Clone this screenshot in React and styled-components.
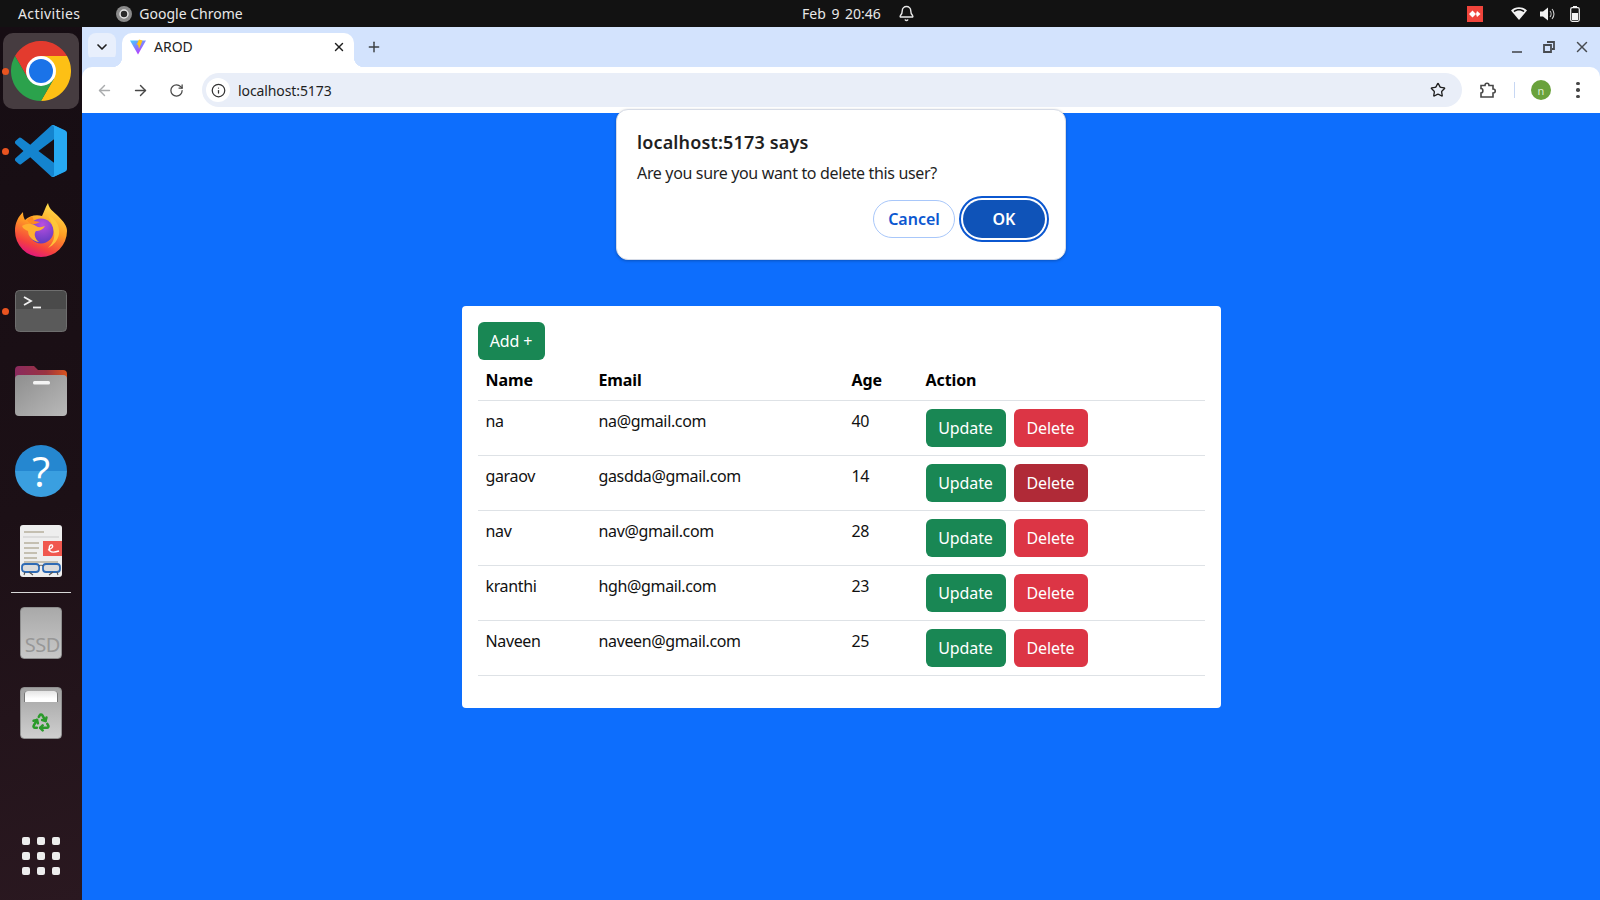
import styled, { createGlobalStyle } from "styled-components"
import {
  ArrowLeft,
  ArrowRight,
  Bell,
  ChevronDown,
  Info,
  Plus,
  Recycle,
  RotateCw,
  Star,
  X,
} from "lucide-react"

const users = [
  { name: "na", email: "na@gmail.com", age: 40 },
  { name: "garaov", email: "gasdda@gmail.com", age: 14, hot: true },
  { name: "nav", email: "nav@gmail.com", age: 28 },
  { name: "kranthi", email: "hgh@gmail.com", age: 23 },
  { name: "Naveen", email: "naveen@gmail.com", age: 25 },
]

const ChromeLogo = ({ size = 60 }) => (
  <svg width={size} height={size} viewBox="0 0 48 48">
    <path fill="#e33b2e" d="M3.2 12A24 24 0 0 1 44.8 12L24 12 13.6 30Z" />
    <path fill="#fdc015" d="M44.8 12A24 24 0 0 1 24 48L34.4 30 24 12Z" />
    <path fill="#2ba24c" d="M24 48A24 24 0 0 1 3.2 12L13.6 30 34.4 30Z" />
    <circle cx="24" cy="24" r="12" fill="#fff" />
    <circle cx="24" cy="24" r="9.6" fill="#1a73e8" />
  </svg>
)

const VsCodeLogo = () => (
  <svg width="52" height="52" viewBox="0 0 24 24">
    <path
      fill="#1484cf"
      d="M23.15 2.587L18.21.21a1.494 1.494 0 0 0-1.705.29l-9.46 8.63-4.12-3.128a.999.999 0 0 0-1.276.057L.327 7.261A1 1 0 0 0 .326 8.74L3.899 12 .326 15.26a1 1 0 0 0 .001 1.479L1.65 17.94a.999.999 0 0 0 1.276.057l4.12-3.128 9.46 8.63a1.492 1.492 0 0 0 1.704.29l4.942-2.377A1.5 1.5 0 0 0 24 20.06V3.939a1.5 1.5 0 0 0-.85-1.352zm-5.146 14.861L10.826 12l7.178-5.448v10.896z"
    />
    <path
      fill="#27a9f2"
      d="M18.21.21l4.94 2.377A1.5 1.5 0 0 1 24 3.94v16.12a1.5 1.5 0 0 1-.85 1.352l-4.94 2.377a1.49 1.49 0 0 1-1.7-.29c.7.5 1.5.1 1.5-.7V1.2c0-.8-.8-1.2-1.5-.7a1.49 1.49 0 0 1 1.7-.29z"
    />
  </svg>
)

const FirefoxLogo = () => (
  <svg width="54" height="56" viewBox="0 0 54 56">
    <defs>
      <linearGradient id="ffBody" x1="0.75" y1="0" x2="0.35" y2="1">
        <stop offset="0" stopColor="#ffe44f" />
        <stop offset="0.45" stopColor="#ff9f24" />
        <stop offset="0.8" stopColor="#f5423e" />
        <stop offset="1" stopColor="#e0157f" />
      </linearGradient>
      <radialGradient id="ffGlobe" cx="0.55" cy="0.25" r="0.85">
        <stop offset="0" stopColor="#b94fe0" />
        <stop offset="1" stopColor="#5538bd" />
      </radialGradient>
    </defs>
    <path
      fill="url(#ffBody)"
      d="M1 28C1 20 4 14 9 9c0 4 1 6 2 8 4-4 11-6 17-4 2-4 3-8 6-13 1 6 5 8 10 13 6 6 9 10 9 15A26 26 0 0 1 1 28z"
    />
    <circle cx="27" cy="28" r="12.500" fill="url(#ffGlobe)" />
    <path fill="#ffc93a" opacity="0.9" d="M34 12c8 4 12 11 11 19-1 6-5 11-11 14 5-5 7-10 6-16-1-7-4-12-6-17z" />
    <path
      fill="#ffb02e"
      d="M8 23c5-3 10-3 14 0 3 2 6 1 9 0-2 4-6 5-9 5-2 2-2 7 3 11-7-1-11-6-11-11-2-1-5-2-6-5z"
    />
    <path fill="#ff8a1f" d="M13 17l5-4 2 5 6 1c-5 3-11 3-13-2z" />
  </svg>
)

const TerminalTile = () => (
  <svg width="52" height="42" viewBox="0 0 52 42">
    <rect x="0.5" y="0.5" width="51" height="41" rx="4" fill="#5a5a5a" stroke="#6e6e6e" />
    <path d="M1 5a4 4 0 0 1 4-4h42a4 4 0 0 1 4 4v14H1z" fill="#4a4a4a" />
    <path d="M9 7l7 4-7 4" fill="none" stroke="#f2f2f2" strokeWidth="1.8" />
    <path d="M18 17.5h8" stroke="#f2f2f2" strokeWidth="1.8" />
  </svg>
)

const FolderTile = () => (
  <svg width="52" height="50" viewBox="0 0 52 50">
    <defs>
      <linearGradient id="folderBack" x1="0" y1="0" x2="1" y2="0">
        <stop offset="0" stopColor="#8a2a5e" />
        <stop offset="0.6" stopColor="#9a3340" />
        <stop offset="1" stopColor="#d9541e" />
      </linearGradient>
      <linearGradient id="folderFront" x1="0" y1="0" x2="1" y2="1">
        <stop offset="0" stopColor="#8e8e8e" />
        <stop offset="1" stopColor="#b9b9b9" />
      </linearGradient>
    </defs>
    <path d="M0 4a4 4 0 0 1 4-4h15l4 4h25a4 4 0 0 1 4 4v12H0z" fill="url(#folderBack)" />
    <rect y="9" width="52" height="41" rx="4" fill="url(#folderFront)" />
    <rect x="18" y="15" width="17" height="3.500" rx="1.500" fill="#f4f4f4" />
  </svg>
)

const HelpTile = styled.div`
  width: 52px;
  height: 52px;
  border-radius: 50%;
  background: linear-gradient(#2587d0 0 50%, #3a9fe0 50% 100%);
  color: #fff;
  display: flex;
  align-items: center;
  justify-content: center;
  font: 42px/1 "Open Sans", sans-serif;
`

const DocTile = () => (
  <svg width="42" height="52" viewBox="0 0 42 52">
    <rect width="42" height="52" rx="3" fill="#eeeeee" />
    <path
      d="M4 7h20M4 18h15M4 23h15M4 28h13M4 33h13M4 37h34"
      stroke="#b7b09d"
      strokeWidth="1.600"
    />
    <path d="M3 12h36" stroke="#c9c9c9" strokeWidth="1.200" />
    <rect x="23" y="16" width="19" height="15" fill="#f0584f" />
    <path d="M28 25c3-1 6-3 4-5-2-1-4 3-2 6 2 2 6 1 9 0" fill="none" stroke="#fff" strokeWidth="1.400" />
    <rect x="2" y="39" width="17" height="8" rx="3" fill="#dcdcdc" stroke="#2f6bb5" strokeWidth="1.800" />
    <rect x="23" y="39" width="17" height="8" rx="3" fill="#dcdcdc" stroke="#2f6bb5" strokeWidth="1.800" />
    <path d="M19 41c1-1 3-1 4 0M5 47l-1 3M9 47l4 3M33 47l-4 3M37 47l1 3" fill="none" stroke="#555" strokeWidth="1.100" />
  </svg>
)

const SsdTile = styled.div`
  width: 42px;
  height: 52px;
  border-radius: 4px;
  background: linear-gradient(#a9a9a9, #c8c8c8);
  border: 1px solid #8d8d8d;
  color: #979797;
  font: 20px/1 "Noto Sans", sans-serif;
  letter-spacing: -0.4px;
  display: flex;
  align-items: flex-end;
  justify-content: flex-end;
  padding: 0 1px 3px 0;
  white-space: nowrap;
`

const TrashTile = styled.div`
  width: 42px;
  height: 52px;
  border-radius: 4px;
  background: linear-gradient(#a2a2a2, #cfcfcf);
  border: 1px solid #8f8f8f;
  position: relative;
  display: flex;
  align-items: flex-end;
  justify-content: center;
  padding-bottom: 6px;
  color: #2a9a2a;
`

const TrashSlot = styled.div`
  position: absolute;
  top: 3px;
  left: 3px;
  right: 3px;
  height: 11px;
  border-radius: 3px 3px 0 0;
  background: linear-gradient(#e4e4e4, #fff 70%);
  box-shadow: 1px 0 0 #777 inset, -1px 0 0 #777 inset;
`

const AppGrid = styled.div`
  display: grid;
  grid-template-columns: repeat(3, 8px);
  gap: 7px;
  margin-top: auto;
  margin-bottom: 25px;

  span {
    width: 8px;
    height: 8px;
    border-radius: 2px;
    background: #ededed;
  }
`

const GlobalStyle = createGlobalStyle`
  * { box-sizing: border-box; }
  html, body { margin: 0; padding: 0; }
  body { font-family: "Noto Sans", sans-serif; overflow: hidden; }
`

const Desktop = styled.div`
  width: 1600px;
  height: 900px;
  display: flex;
  flex-direction: column;
  overflow: hidden;
`

const TopBar = styled.header`
  height: 27px;
  flex: none;
  background: #121212;
  color: #e8e8e8;
  font-size: 14px;
  display: flex;
  align-items: center;
  padding-left: 18px;
  position: relative;
`

const Activities = styled.span`
  letter-spacing: 0.4px;
`

const AppLabel = styled.div`
  display: flex;
  align-items: center;
  gap: 7px;
  margin-left: 36px;
`

const Clock = styled.div`
  position: absolute;
  left: 802px;
  top: 0;
  height: 27px;
  display: flex;
  align-items: center;
  gap: 17px;
  word-spacing: 2px;
`

const Tray = styled.div`
  margin-left: auto;
  display: flex;
  align-items: center;
  margin-right: 20px;
`

const TrayIcon = styled.svg`
  margin-left: ${p => p.$gap}px;
`

const AnyDesk = styled.div`
  width: 16px;
  height: 16px;
  background: #ef443b;
  display: flex;
  align-items: center;
  justify-content: center;
  margin-right: 28px;
`

const Main = styled.div`
  flex: 1;
  display: flex;
  min-height: 0;
`

const Dock = styled.nav`
  width: 82px;
  flex: none;
  padding-top: 4px;
  display: flex;
  flex-direction: column;
  align-items: center;
  background: linear-gradient(165deg, #160d13 0%, #1c1016 55%, #2a1820 100%);
`

const DockItem = styled.div`
  width: 76px;
  height: 76px;
  margin: 2px 0;
  border-radius: 10px;
  display: flex;
  align-items: center;
  justify-content: center;
  position: relative;
  background: ${p => (p.$active ? "#463c40" : "transparent")};

  &::before {
    content: "";
    display: ${p => (p.$running ? "block" : "none")};
    position: absolute;
    left: 0;
    top: 35px;
    width: 7px;
    height: 7px;
    border-radius: 50%;
    background: #e95420;
    transform: translateX(-1px);
  }
`

const DockRule = styled.hr`
  width: 60px;
  height: 1px;
  border: 0;
  margin: 1px 0 0;
  background: #d8d8d8;
`

const Browser = styled.div`
  flex: 1;
  min-width: 0;
  display: flex;
  flex-direction: column;
  position: relative;
`

const TabStrip = styled.div`
  height: 40px;
  flex: none;
  background: #d3e3fd;
  display: flex;
  align-items: flex-start;
  padding: 6px 0 0 6px;
  color: #3c4043;
`

const TabSearch = styled.button`
  width: 28px;
  height: 28px;
  border: 0;
  padding: 0;
  border-radius: 8px;
  background: #e8effc;
  color: #1f1f1f;
  display: flex;
  align-items: center;
  justify-content: center;
`

const Tab = styled.div`
  width: 232px;
  height: 34px;
  margin-left: 6px;
  border-radius: 10px 10px 0 0;
  background: #fff;
  display: flex;
  align-items: center;
  padding: 0 8px 7px;
  position: relative;
  color: #1f1f1f;
  font: 14px "Noto Sans", sans-serif;

  &::before,
  &::after {
    content: "";
    position: absolute;
    bottom: 0;
    width: 10px;
    height: 10px;
  }
  &::before {
    left: -10px;
    background: radial-gradient(circle at 0 0, #d3e3fd 10px, #fff 10.500px);
  }
  &::after {
    right: -10px;
    background: radial-gradient(circle at 100% 0, #d3e3fd 10px, #fff 10.500px);
  }
`

const TabTitle = styled.span`
  margin-left: 8px;
  flex: 1;
`

const NewTab = styled.div`
  margin-left: 12px;
  height: 28px;
  display: flex;
  align-items: center;
`

const WindowControls = styled.div`
  margin-left: auto;
  height: 28px;
  display: flex;
  align-items: center;
  gap: 16px;
  margin-right: 9px;
  color: #474b50;
`

const Toolbar = styled.div`
  height: 46px;
  flex: none;
  background: #fff;
  display: flex;
  align-items: center;
  padding: 0 0 0 12px;
  color: #474747;
  border-radius: 10px 10px 0 0;
  box-shadow: 0 -10px 0 0 #d3e3fd;
`

const NavIcon = styled.div`
  width: 20px;
  height: 20px;
  margin-right: 16px;
  display: flex;
  align-items: center;
  justify-content: center;
  color: ${p => (p.$muted ? "#a9abad" : "#474747")};
`

const Omnibox = styled.div`
  width: 1260px;
  height: 34px;
  border-radius: 17px;
  background: #e9eef8;
  display: flex;
  align-items: center;
  padding: 0 16px 0 4px;
  font-size: 14px;
  letter-spacing: -0.1px;
  color: #1f1f1f;
`

const SiteInfo = styled.div`
  width: 24px;
  height: 24px;
  border-radius: 50%;
  background: #fff;
  display: flex;
  align-items: center;
  justify-content: center;
  margin-right: 8px;
`

const Url = styled.span`
  flex: 1;
`

const ToolbarEnd = styled.div`
  display: flex;
  align-items: center;
  margin-left: 17px;
`

const Divider = styled.div`
  width: 1px;
  height: 16px;
  background: #c7d7f3;
  margin: 0 16px 0 17px;
`

const Avatar = styled.div`
  width: 20px;
  height: 20px;
  border-radius: 50%;
  background: #6aa23c;
  color: #dfeecf;
  font-size: 11px;
  display: flex;
  align-items: center;
  justify-content: center;
  margin-right: 25px;
`

const Kebab = styled.div`
  display: flex;
  flex-direction: column;
  gap: 3px;

  span {
    width: 3.500px;
    height: 3.500px;
    border-radius: 50%;
    background: #474747;
  }
`

const Page = styled.main`
  flex: 1;
  background: #0d6efd;
  display: flex;
  align-items: center;
  justify-content: center;
`

const Card = styled.section`
  width: 759px;
  padding: 16px;
  background: #fff;
  border-radius: 4px;
`

const Button = styled.button`
  height: 38px;
  width: ${p => p.$width}px;
  padding: 0;
  border: 1px solid transparent;
  border-radius: 6px;
  color: #fff;
  font: 16px "Noto Sans", sans-serif;
  letter-spacing: -0.1px;
  background: ${p => p.$bg};
`

const Table = styled.table`
  width: 727px;
  margin-bottom: 16px;
  border-collapse: collapse;
  table-layout: fixed;
  color: #111;
  font-size: 16px;
  line-height: 24px;
`

const Th = styled.th`
  padding: 8px;
  width: ${p => p.$width}px;
  text-align: left;
  font-weight: 700;
  color: #000;
  letter-spacing: -0.1px;
  border-bottom: 1px solid #dee2e6;
`

const Td = styled.td`
  padding: 8px;
  vertical-align: top;
  letter-spacing: -0.36px;
  border-bottom: 1px solid #dee2e6;
`

const Actions = styled.div`
  display: flex;
  gap: 8px;
`

const Dialog = styled.div`
  position: absolute;
  left: 534px;
  top: 82px;
  width: 450px;
  height: 151px;
  padding: 20px;
  background: #fff;
  border-radius: 12px;
  border: 1px solid #d6dbe6;
  box-shadow: 0 1px 3px rgba(0, 0, 0, 0.25);
  color: #1f1f1f;
`

const DialogTitle = styled.div`
  font-size: 18px;
  font-weight: 600;
  line-height: 24px;
  letter-spacing: 0.15px;
`

const DialogText = styled.div`
  margin-top: 7px;
  font-size: 16px;
  line-height: 24px;
  letter-spacing: -0.34px;
`

const DialogActions = styled.div`
  display: flex;
  justify-content: flex-end;
  align-items: center;
  gap: 8px;
  margin-top: 15px;
`

const CancelButton = styled.button`
  width: 82px;
  height: 38px;
  border: 1px solid #a8c7fa;
  border-radius: 19px;
  background: #fff;
  color: #0b57d0;
  font: 600 16px "Noto Sans", sans-serif;
  padding: 0;
`

const OkButton = styled.button`
  width: 82px;
  height: 38px;
  border: 0;
  border-radius: 19px;
  background: #0f53b8;
  color: #fff;
  font: 600 16px "Noto Sans", sans-serif;
  padding: 0;
  outline: 2px solid #0b57d0;
  outline-offset: 2px;
`

export default function App() {
  return (
    <>
      <GlobalStyle />
      <Desktop>
        <TopBar>
          <Activities>Activities</Activities>
          <AppLabel>
            <svg width="16" height="16" viewBox="0 0 16 16">
              <circle cx="8" cy="8" r="8" fill="#8a8a8a" />
              <circle cx="8" cy="8" r="4" fill="#2a2a2a" stroke="#e6e6e6" strokeWidth="1.500" />
            </svg>
            Google Chrome
          </AppLabel>
          <Clock>
            <span>Feb 9 20:46</span>
            <Bell size={17} color="#e8e8e8" />
          </Clock>
          <Tray>
            <AnyDesk>
              <svg width="12" height="8" viewBox="0 0 12 8">
                <path fill="#fff" d="M3.500 0.500L7 4 3.500 7.500 0 4zM8 1l3.500 3L8 7l-1-3z" />
              </svg>
            </AnyDesk>
            <svg width="16" height="13" viewBox="0 0 16 13">
              <path fill="#f2f2f2" d="M8 13L0 3.500C4.500-.9 11.500-.9 16 3.500z" />
              <path fill="#121212" d="M2.500 4C5.700 1.400 10.300 1.400 13.500 4l-.8 1C9.900 2.900 6.100 2.900 3.300 5z" />
            </svg>
            <TrayIcon as="svg" $gap={13} width="16" height="16" viewBox="0 0 16 16">
              <path fill="#f2f2f2" d="M0 5.500h3L8 1.500v13l-5-4H0z" />
              <path d="M10 5c1.400 1.600 1.400 4.400 0 6M12 3c2.600 2.800 2.600 7.200 0 10" fill="none" stroke="#d0d0d0" strokeWidth="1.100" />
            </TrayIcon>
            <TrayIcon as="svg" $gap={14} width="10" height="16" viewBox="0 0 10 16">
              <rect x="0.700" y="1.700" width="8.600" height="13.600" rx="1.500" fill="none" stroke="#f2f2f2" strokeWidth="1.200" />
              <rect x="3" y="0" width="4" height="2" fill="#f2f2f2" />
              <rect x="2" y="7" width="6" height="7" fill="#f2f2f2" />
            </TrayIcon>
          </Tray>
        </TopBar>
        <Main>
          <Dock>
            <DockItem $active $running>
              <ChromeLogo />
            </DockItem>
            <DockItem $running>
              <VsCodeLogo />
            </DockItem>
            <DockItem>
              <FirefoxLogo />
            </DockItem>
            <DockItem $running>
              <TerminalTile />
            </DockItem>
            <DockItem>
              <FolderTile />
            </DockItem>
            <DockItem>
              <HelpTile>?</HelpTile>
            </DockItem>
            <DockItem>
              <DocTile />
            </DockItem>
            <DockRule />
            <DockItem>
              <SsdTile>SSD</SsdTile>
            </DockItem>
            <DockItem>
              <TrashTile>
                <TrashSlot />
                <Recycle size={20} strokeWidth={3} />
              </TrashTile>
            </DockItem>
            <AppGrid>
              {Array.from({ length: 9 }, (_, i) => (
                <span key={i} />
              ))}
            </AppGrid>
          </Dock>
          <Browser>
            <TabStrip>
              <TabSearch>
                <ChevronDown size={16} strokeWidth={2.500} />
              </TabSearch>
              <Tab>
                <svg width="16" height="16" viewBox="0 0 16 16">
                  <defs>
                    <linearGradient id="viteV" x1="0" y1="0" x2="0.6" y2="1">
                      <stop offset="0" stopColor="#41d1ff" />
                      <stop offset="1" stopColor="#bd34fe" />
                    </linearGradient>
                  </defs>
                  <path fill="url(#viteV)" d="M0 1.500h16L8 15.500z" />
                  <path fill="#ffc517" d="M9 .5l3.500 1-3.500 8.500-1-4.500-1.500.5z" />
                </svg>
                <TabTitle>AROD</TabTitle>
                <X size={14} strokeWidth={2.500} />
              </Tab>
              <NewTab>
                <Plus size={16} strokeWidth={2.200} />
              </NewTab>
              <WindowControls>
                <svg width="16" height="16" viewBox="0 0 16 16">
                  <path d="M3 13h10" stroke="currentColor" strokeWidth="1.600" />
                </svg>
                <svg width="16" height="16" viewBox="0 0 16 16">
                  <path d="M6 3h7v7h-2M3 6h7v7H3z" fill="none" stroke="currentColor" strokeWidth="1.800" />
                </svg>
                <X size={18} strokeWidth={2} />
              </WindowControls>
            </TabStrip>
            <Toolbar>
              <NavIcon $muted>
                <ArrowLeft size={17} />
              </NavIcon>
              <NavIcon>
                <ArrowRight size={17} />
              </NavIcon>
              <NavIcon>
                <RotateCw size={15} />
              </NavIcon>
              <Omnibox>
                <SiteInfo>
                  <Info size={15} color="#333" />
                </SiteInfo>
                <Url>localhost:5173</Url>
                <Star size={16} strokeWidth={2} />
              </Omnibox>
              <ToolbarEnd>
                <svg width="18" height="18" viewBox="0 0 18 18">
                  <path
                    fill="none"
                    stroke="#474747"
                    strokeWidth="1.600"
                    d="M2 4.500h4c0-3 4-3 4 0h4v3.500c3 0 3 4 0 4v4H2v-4c2.500 0 2.500-4.500 0-4.500z"
                  />
                </svg>
                <Divider />
                <Avatar>n</Avatar>
                <Kebab>
                  <span />
                  <span />
                  <span />
                </Kebab>
              </ToolbarEnd>
            </Toolbar>
            <Page>
              <Card>
                <Button $bg="#198754" $width={67}>
                  Add +
                </Button>
                <Table>
                  <thead>
                    <tr>
                      <Th $width={113}>Name</Th>
                      <Th $width={253}>Email</Th>
                      <Th $width={74}>Age</Th>
                      <Th $width={287}>Action</Th>
                    </tr>
                  </thead>
                  <tbody>
                    {users.map(u => (
                      <tr key={u.email}>
                        <Td>{u.name}</Td>
                        <Td>{u.email}</Td>
                        <Td>{u.age}</Td>
                        <Td>
                          <Actions>
                            <Button $bg="#198754" $width={80}>
                              Update
                            </Button>
                            <Button $bg={u.hot ? "#b02a37" : "#dc3545"} $width={74}>
                              Delete
                            </Button>
                          </Actions>
                        </Td>
                      </tr>
                    ))}
                  </tbody>
                </Table>
              </Card>
            </Page>
            <Dialog>
              <DialogTitle>localhost:5173 says</DialogTitle>
              <DialogText>Are you sure you want to delete this user?</DialogText>
              <DialogActions>
                <CancelButton>Cancel</CancelButton>
                <OkButton>OK</OkButton>
              </DialogActions>
            </Dialog>
          </Browser>
        </Main>
      </Desktop>
    </>
  )
}
